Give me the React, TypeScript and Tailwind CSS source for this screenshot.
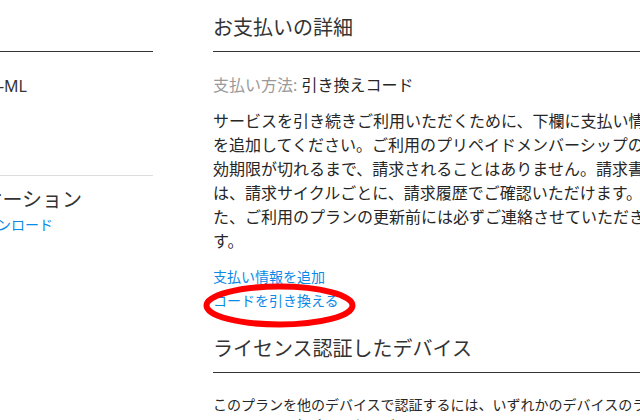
import React from "react";

const font = { fontFamily: '"Noto Sans", "Noto Sans CJK JP", sans-serif' };

export default function App() {
  return (
    <div
      className="relative w-[640px] h-[420px] overflow-hidden bg-white flex text-[#262626]"
      style={font}
    >
      {/* Left column (clipped) */}
      <div className="w-[153px] shrink-0 overflow-hidden flex flex-col">
        <div className="h-[52px] shrink-0 border-b border-[#333]" />
        <div className="mt-[22px] w-[27px] flex justify-end">
          <span className="shrink-0 whitespace-nowrap text-[16px] leading-[24px] text-[#333]">
            XXXX-L-ML
          </span>
        </div>
        <div className="mt-[77px] border-b border-[#ddd]" />
        <div className="mt-[10px] w-[82px] flex justify-end">
          <span className="shrink-0 whitespace-nowrap text-[20px] leading-[28px] text-[#333]">
            アプリケーション
          </span>
        </div>
        <div className="w-[53px] flex justify-end">
          <a className="shrink-0 whitespace-nowrap text-[14px] leading-[22px] text-[#0a8ae8]">
            ダウンロード
          </a>
        </div>
      </div>

      {/* Right column */}
      <div className="ml-[60px] w-[448px] shrink-0 flex flex-col">
        <h2 className="pt-[14px] pb-[9px] border-b border-[#333] text-[20px] leading-[28px] font-normal text-[#333] whitespace-nowrap">
          お支払いの詳細
        </h2>
        <div className="mt-[21px] text-[16px] leading-[24px] whitespace-nowrap">
          <span className="text-[#999]">支払い方法: </span>
          <span className="text-[#262626]">引き換えコード</span>
        </div>
        <p className="mt-[12px] text-[16px] leading-[24px] text-[#262626]">
          サービスを引き続きご利用いただくために、下欄に支払い情報を追加してください。ご利用のプリペイドメンバーシップの有効期限が切れるまで、請求されることはありません。請求書は、請求サイクルごとに、請求履歴でご確認いただけます。また、ご利用のプランの更新前には必ずご連絡させていただきます。
        </p>
        <div className="mt-[12px] flex flex-col items-start">
          <a className="text-[14px] leading-[24px] text-[#0a8ae8] whitespace-nowrap">
            支払い情報を追加
          </a>
          <a className="text-[14px] leading-[24px] text-[#0a8ae8] whitespace-nowrap">
            コードを引き換える
          </a>
        </div>
        <h2 className="mt-[22px] pb-[9px] border-b border-[#333] text-[20px] leading-[28px] font-normal text-[#333] whitespace-nowrap">
          ライセンス認証したデバイス
        </h2>
        <p className="mt-[21px] text-[14px] leading-[21px] text-[#262626]">
          このプランを他のデバイスで認証するには、いずれかのデバイスのライセンス認証を解除する必要があります。
        </p>
      </div>

      {/* Red annotation ellipse */}
      <svg
        className="absolute left-0 top-0 pointer-events-none"
        width="640"
        height="420"
        viewBox="0 0 640 420"
      >
        <ellipse
          cx="279.5"
          cy="305.5"
          rx="73"
          ry="19"
          fill="none"
          stroke="#ff0000"
          strokeWidth="6"
        />
      </svg>
    </div>
  );
}
